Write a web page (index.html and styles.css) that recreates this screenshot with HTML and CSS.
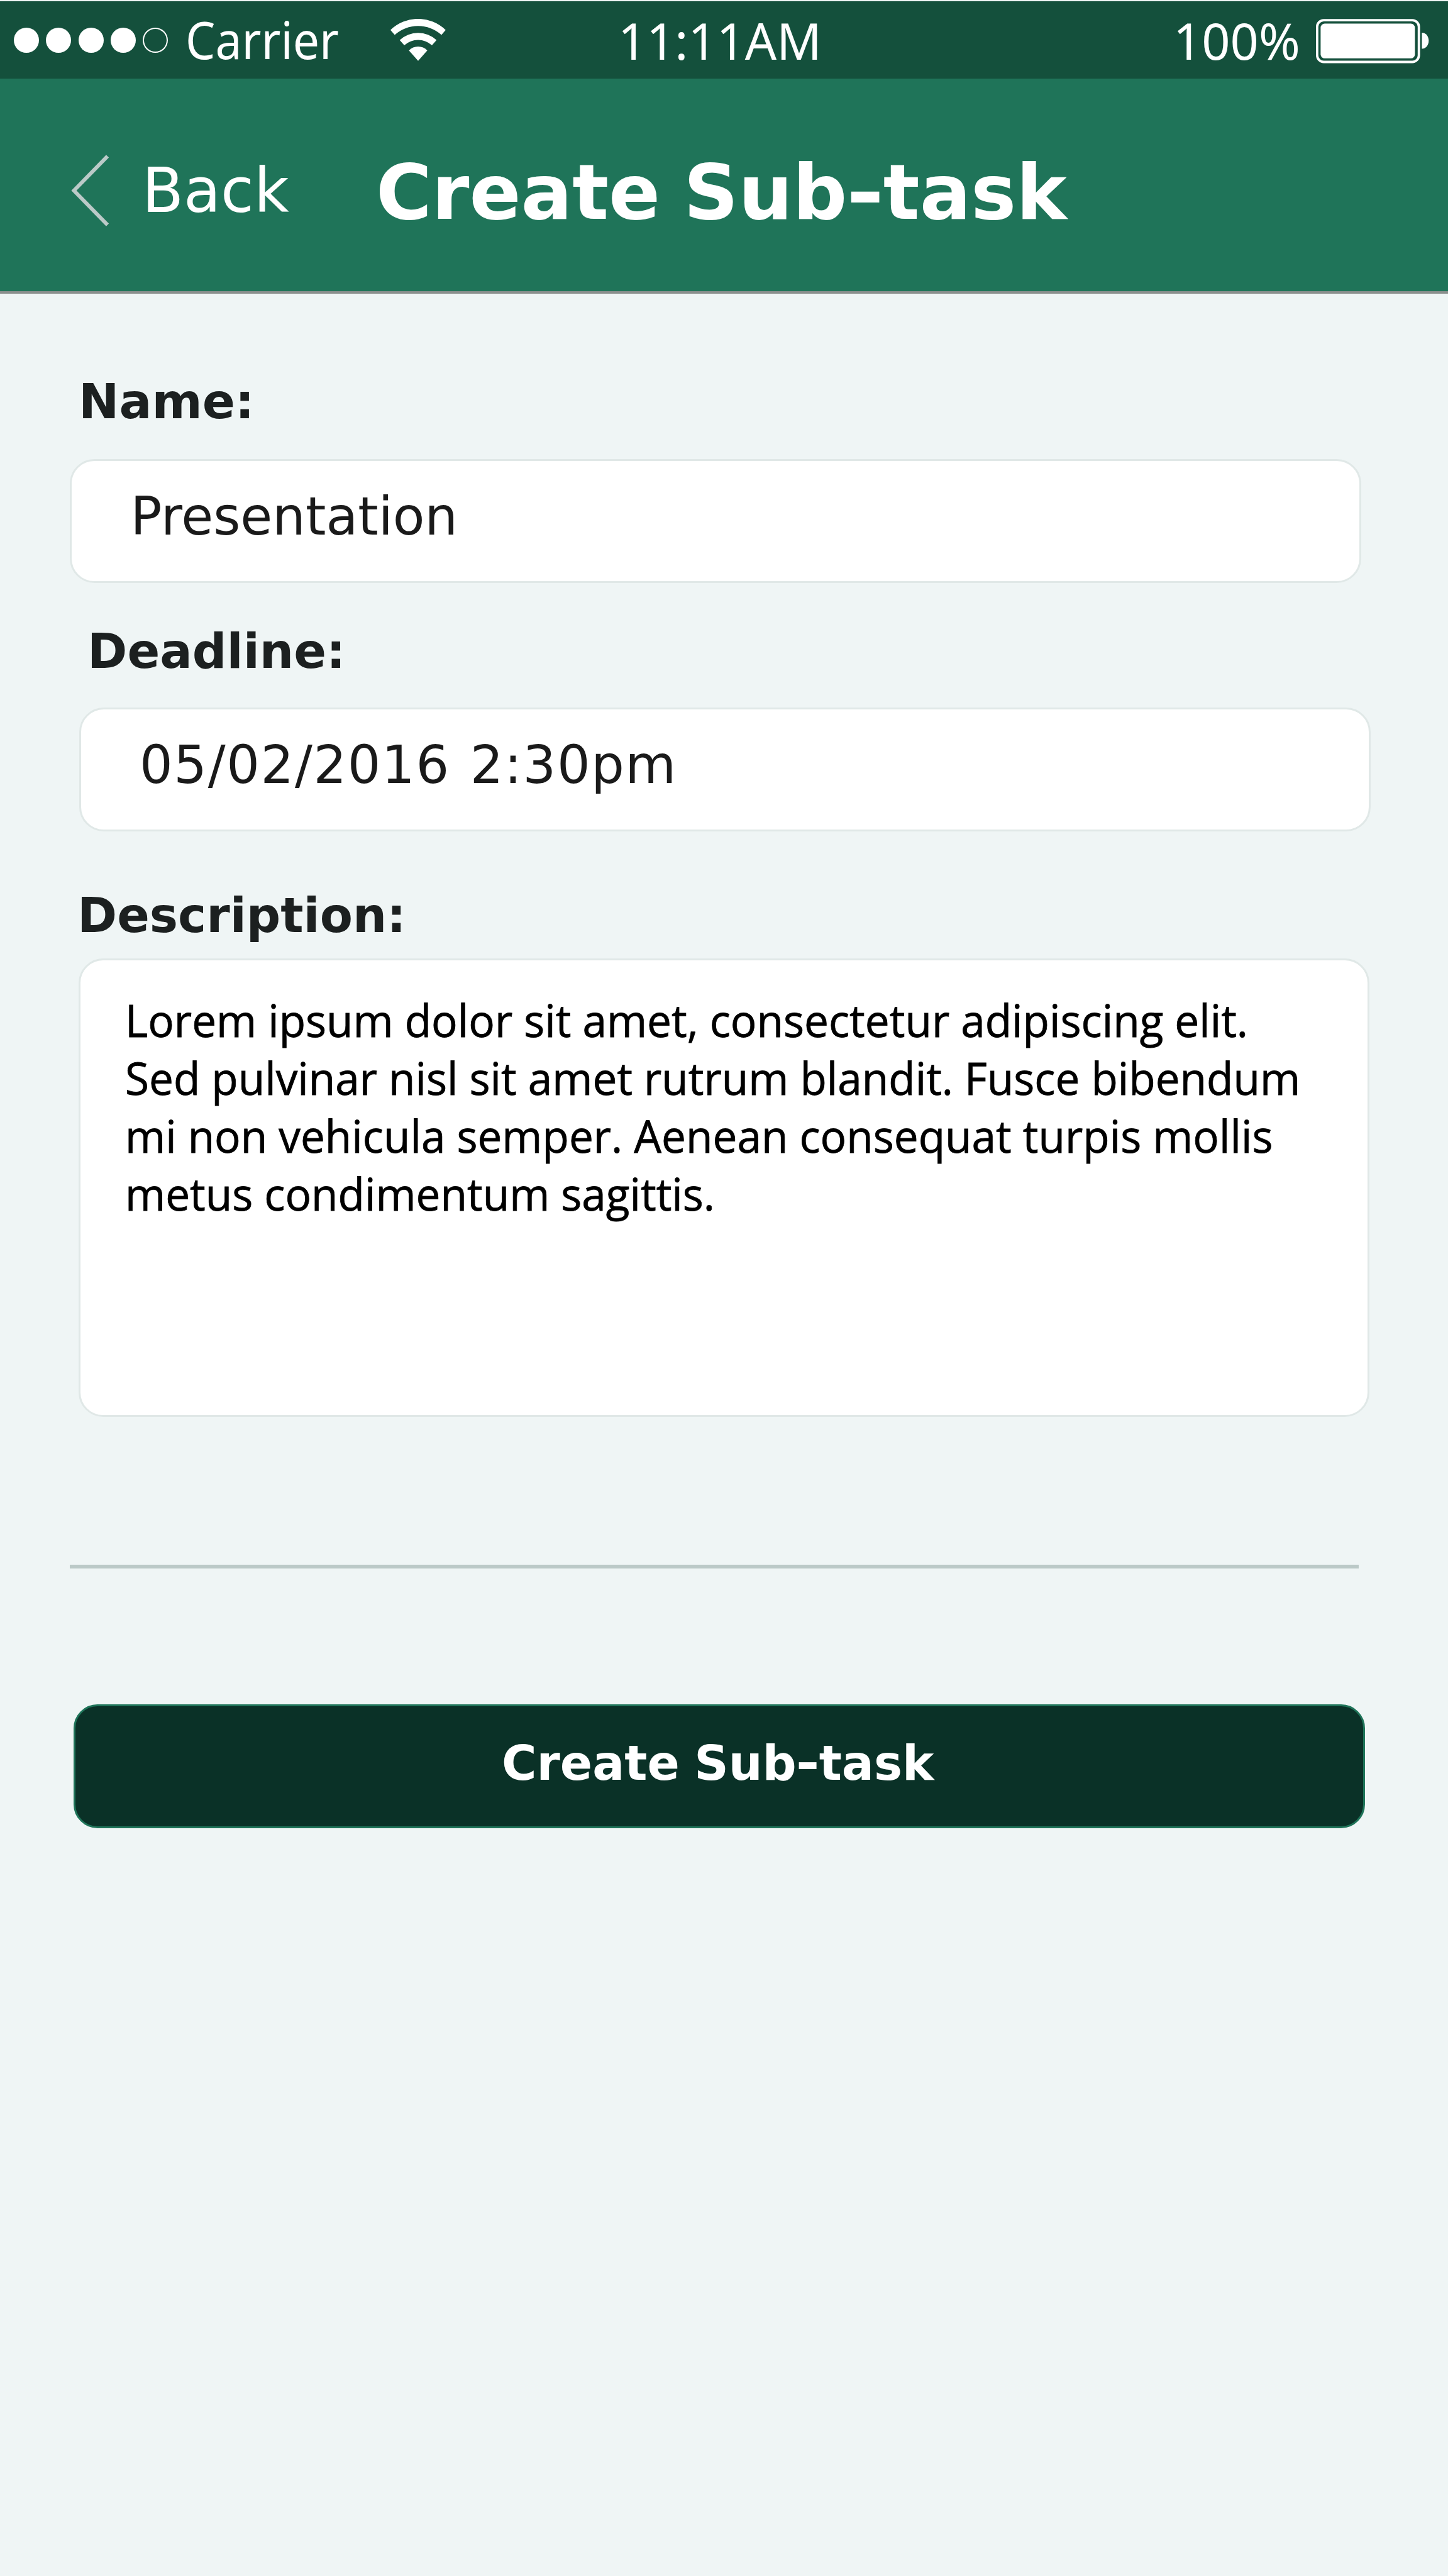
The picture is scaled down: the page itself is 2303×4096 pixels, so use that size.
FILE: index.html
```html
<!DOCTYPE html>
<html lang="en">
<head>
<meta charset="utf-8">
<title>Create Sub-task</title>
<link rel="stylesheet" href="styles.css">
</head>
<body>
<div class="statusbar">
  <div class="signal"><i class="dot"></i><i class="dot"></i><i class="dot"></i><i class="dot"></i><i class="dot dot-empty"></i></div>
  <span class="status-text carrier">Carrier</span>
  <svg class="wifi" width="88" height="67" viewBox="0 0 88 67">
    <path d="M0 17.7A63 63 0 0 1 87.8 17.7L81.1 25.4A56 56 0 0 0 6.8 25.4Z"/>
    <path d="M14.7 33.8A43 43 0 0 1 73.3 33.8L66 41.9A33 33 0 0 0 22 41.9Z"/>
    <path d="M29.4 50.2A20.3 20.3 0 0 1 58.6 50.2L44 66.7Z"/>
  </svg>
  <span class="status-text time">11:11AM</span>
  <span class="status-text percent">100%</span>
  <svg class="battery" width="180" height="71" viewBox="0 0 180 71">
    <rect class="battery-case" x="1.9" y="2.1" width="161.8" height="66.4" rx="10.5"/>
    <rect x="7.4" y="7.6" width="150" height="55.2" rx="6.5"/>
    <path d="M168.5 22C175 22 179.3 28 179.3 34.8S175 47.6 168.5 47.6Z"/>
  </svg>
</div>
<header class="navbar">
  <a class="back">
    <svg class="chevron" width="64" height="114" viewBox="0 0 64 114"><path d="M60 2.4L6.6 57L60 111.6"/></svg>
    <span class="back-text">Back</span>
  </a>
  <h1 class="title">Create Sub<span class="hyphen">-</span>task</h1>
</header>
<main class="form">
  <section class="field field-name">
    <div class="label">Name:</div>
    <div class="input">Presentation</div>
  </section>
  <section class="field field-deadline">
    <div class="label">Deadline:</div>
    <div class="input date">05/02/2016 2:30pm</div>
  </section>
  <section class="field field-description">
    <div class="label">Description:</div>
    <div class="textarea"><p class="copy">Lorem ipsum dolor sit amet, consectetur adipiscing elit.<br>Sed pulvinar nisl sit amet rutrum blandit. Fusce bibendum<br>mi non vehicula semper. Aenean consequat turpis mollis<br>metus condimentum sagittis.</p></div>
  </section>
  <hr class="divider">
  <div class="button">Create Sub<span class="hyphen">-</span>task</div>
</main>
</body>
</html>
```
FILE: styles.css
```css
* { box-sizing: border-box; }

body {
  margin: 0;
  padding-top: 2px;
  height: 4096px;
  background: #eff5f5;
  font-family: "DejaVu Sans", Verdana, sans-serif;
}

/* Status bar */
.statusbar {
  display: grid;
  grid-template-columns: 273px 326px 361.5px 883.7px 226.8px auto;
  align-items: start;
  height: 123px;
  padding-left: 22px;
  background: #14503c;
  color: #fff;
}
.signal { display: flex; gap: 11.1px; padding-top: 42.4px; }
.dot { width: 40.2px; height: 40px; border-radius: 50%; background: #fff; }
.dot-empty { background: none; border: 2px solid #fff; }
.status-text {
  font: 400 81px/121.5px "Noto Sans", "Open Sans", sans-serif;
  white-space: nowrap;
  transform-origin: 0 50%;
}
.carrier { font-size: 82.5px; line-height: 121.5px; transform: scaleX(.909); }
.time { line-height: 123px; transform: scaleX(.975); }
.percent { font-size: 80px; line-height: 123px; transform: scaleX(.99); }
.wifi { margin-top: 27.8px; fill: #fff; }
.battery { margin-top: 27.8px; fill: #fff; }
.battery-case { fill: none; stroke: #fff; stroke-width: 3.8; }

/* Navigation bar */
.navbar {
  display: flex;
  height: 342px;
  border-bottom: 4px solid #8a8f8d;
  background: #1f7459;
  color: #fff;
}
.back { display: flex; width: 598px; padding-left: 111px; }
.chevron { margin-top: 120.7px; fill: none; stroke: #bbcac8; stroke-width: 6; }
.back-text {
  margin-left: 51.3px;
  font-size: 98px;
  line-height: 356px;
  transform: scaleX(.982);
  transform-origin: 0 50%;
}
.title {
  margin: 0;
  height: 338px;
  font-size: 122px;
  font-weight: 700;
  line-height: 363px;
  white-space: nowrap;
  word-spacing: -5px;
  transform: scaleX(.992);
  transform-origin: 0 50%;
}
.hyphen {
  display: inline-block;
  margin: 0 .03em;
  transform: scaleX(1.2);
}

/* Form */
.form { padding-top: 126px; }
.field { width: 2053.5px; }
.field-name { margin-left: 111px; }
.field-deadline { margin: 63px 0 0 126px; }
.field-description { margin: 88px 0 0 124.5px; }
.label {
  padding-left: 13px;
  font-size: 76.4px;
  font-weight: 700;
  line-height: 91px;
  height: 90px;
  color: #1c2020;
}
.field-name .label { padding-left: 14px; font-size: 77px; }
.field-description .label { margin-left: -14.5px; font-size: 76.1px; }
.input, .textarea {
  border: 3px solid #e0e8e7;
  border-radius: 39px;
  background: #fff;
}
.input {
  height: 197px;
  margin-top: 47px;
  padding-left: 93.4px;
  font-size: 82.9px;
  line-height: 177px;
  color: #1a1a1a;
}
.date {
  margin-top: 45px;
  padding-left: 93px;
  line-height: 178px;
  letter-spacing: 1.6px;
  word-spacing: 4px;
}
.textarea { height: 729px; margin-top: 24px; padding: 49px 0 0 71.5px; }
.copy {
  margin: 0;
  font: 400 71.5px/92.1px "Open Sans", "Noto Sans", sans-serif;
  color: #000;
  white-space: nowrap;
  -webkit-text-stroke: .8px #000;
  transform: scaleX(.969);
  transform-origin: 0 0;
}
.divider {
  width: 2050px;
  height: 6px;
  margin: 235px 0 0 111px;
  border: 0;
  background: #bbc9c7;
}
.button {
  width: 2054px;
  height: 197px;
  margin: 216px 0 0 117px;
  padding-left: 678px;
  border: 3px solid #1f7459;
  border-radius: 38px;
  background: #0a3127;
  color: #fff;
  font-size: 75.7px;
  font-weight: 700;
  line-height: 182px;
  white-space: nowrap;
  word-spacing: -3px;
}
```
